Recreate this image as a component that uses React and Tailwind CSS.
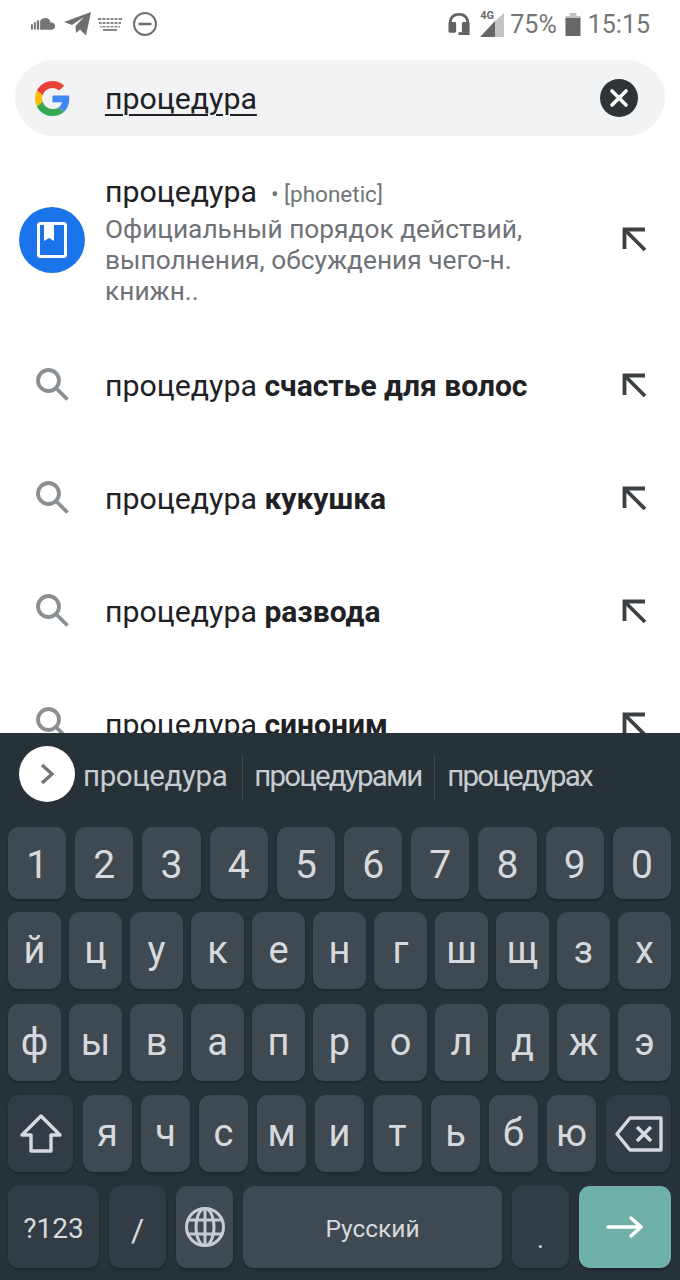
import React from 'react'

const numbers = ['1', '2', '3', '4', '5', '6', '7', '8', '9', '0']
const rowOne = ['й', 'ц', 'у', 'к', 'е', 'н', 'г', 'ш', 'щ', 'з', 'х']
const rowTwo = ['ф', 'ы', 'в', 'а', 'п', 'р', 'о', 'л', 'д', 'ж', 'э']
const rowThree = ['я', 'ч', 'с', 'м', 'и', 'т', 'ь', 'б', 'ю']
const suggestions = ['счастье для волос', 'кукушка', 'развода', 'синоним']

function GoogleLogo() {
  return (
    <svg viewBox="0 0 48 48" className="w-[35px] h-[35px]">
      <path fill="#EA4335" d="M24 9.500c3.500 0 6.700 1.200 9.200 3.600l6.900-6.900C35.900 2.400 30.500 0 24 0 14.600 0 6.500 5.400 2.600 13.200l8 6.200C12.500 13.600 17.800 9.500 24 9.500z" />
      <path fill="#4285F4" d="M47 24.500c0-1.600-.1-3.100-.4-4.500H24v9h12.900c-.6 3-2.200 5.500-4.700 7.200l7.700 6C44.400 38.500 47 32.100 47 24.500z" />
      <path fill="#FBBC05" d="M10.600 28.600c-.5-1.400-.8-3-.8-4.600s.3-3.200.8-4.600l-8-6.200C.9 16.500 0 20.100 0 24s.9 7.500 2.600 10.800l8-6.200z" />
      <path fill="#34A853" d="M24 48c6.500 0 11.900-2.100 15.900-5.800l-7.700-6c-2.200 1.400-4.900 2.300-8.200 2.300-6.200 0-11.500-4.100-13.400-9.900l-8 6.200C6.500 42.600 14.600 48 24 48z" />
    </svg>
  )
}

function ArrowUpLeft() {
  return (
    <svg viewBox="0 0 32 32" className="w-8 h-8" fill="none" stroke="#3c4043" strokeWidth="3.800">
      <path d="M27 5.500H6.500V25" />
      <path d="M6.500 5.500 27 26" />
    </svg>
  )
}

function SearchIcon() {
  return (
    <svg viewBox="0 0 36 36" className="w-9 h-9 mb-[4px]" fill="none" stroke="#8a8f93" strokeWidth="3.800">
      <circle cx="14.500" cy="14.500" r="10.500" />
      <path d="M22 22 33.500 33.500" />
    </svg>
  )
}

function Key({ children, className = 'bg-[#3f4951]' }) {
  return (
    <div className={`flex items-center justify-center rounded-[11px] shadow-[0_2px_2px_rgba(0,0,0,0.22)] text-[#d6dade] ${className}`}>
      {children}
    </div>
  )
}

function StatusBar() {
  return (
    <div className="h-12 flex items-center justify-between pl-[31px] pr-[30px] text-[#6e6e6e]">
      <div className="flex items-center">
        <svg viewBox="0 0 26 14" className="w-[25px] h-[14px]" fill="#757575">
          <rect x="0" y="7" width="2" height="6" rx="1" />
          <rect x="3" y="5" width="2" height="8" rx="1" />
          <rect x="6" y="3" width="2.500" height="10" rx="1" />
          <path d="M9.500 13V3.500C11 1.500 13 .8 15 .8c3 0 5 2 5.500 4.800 2.500-.6 4.500 1 4.500 3.700S23 13 21 13z" />
        </svg>
        <svg viewBox="0 0 27 24" className="w-[27px] h-6 ml-2" fill="#6f6f6f">
          <path d="M27 0 22 23.500 16 17.500 12 21 11.500 14 20 5 8 13 0 10z" />
        </svg>
        <svg viewBox="0 0 24 14" className="w-6 h-[14px] ml-[7px]" fill="#8a8a8a">
          <path d="M0 1h24v2H0zM1 5h22v2H1zM2 9h20v1.500H2zM5 12h14v2H5z" />
          <path stroke="#ffffff" strokeWidth="1" d="M4 0v11M8 0v11M12 0v11M16 0v11M20 0v11" />
        </svg>
        <svg viewBox="0 0 24 24" className="w-6 h-6 ml-[11px]" fill="none" stroke="#6f6f6f" strokeWidth="2">
          <circle cx="12" cy="12" r="11" />
          <path strokeWidth="2.600" d="M5.500 12h13" />
        </svg>
      </div>
      <div className="flex items-center text-[25px] leading-none text-[#757575]">
        <svg viewBox="0 0 24 24" className="w-[23px] h-[24px]" fill="#626262">
          <path d="M1 13V10C1 4 5.500 .5 11.500 .5S22 4 22 10v3h-3v-3C19 6 16 3.500 11.500 3.500S4 6 4 10v3z" />
          <rect x="0.500" y="10" width="8" height="11" rx="1.500" />
          <rect x="14.500" y="10" width="8" height="11" rx="1.500" />
          <path d="M11 20.500h11.500v3H11z" />
        </svg>
        <div className="relative w-6 h-[25px] ml-[9px]">
          <svg viewBox="0 0 24 24" className="absolute left-0 bottom-0 w-6 h-6">
            <path fill="#c4c4c4" d="M24 0v24H15V8z" />
            <path fill="#666666" d="M15 8v16H0z" />
          </svg>
          <span className="absolute left-0 top-[-2px] text-[11px] font-bold text-[#6a6a6a]">4G</span>
        </div>
        <span className="ml-[6px]">75%</span>
        <svg viewBox="0 0 15 23" className="w-[16px] h-[23px] ml-2">
          <path fill="#c2c2c2" d="M4 0h7v3h4v4H0V3h4z" />
          <path fill="#666666" d="M0 5h15v18H0z" />
        </svg>
        <span className="ml-[7px]">15:15</span>
      </div>
    </div>
  )
}

function SearchBar() {
  return (
    <div className="mt-3 mx-[15px] h-[76px] rounded-[38px] bg-[#f1f3f4] flex items-center pl-5 pr-[27px]">
      <GoogleLogo />
      <span className="ml-[35px] pt-[2px] text-[30.300px] text-[#202124] underline underline-offset-[5px] decoration-[1.500px] flex-1">процедура</span>
      <div className="w-[38px] h-[38px] rounded-full bg-[#2f3437] flex items-center justify-center">
        <svg viewBox="0 0 20 20" className="w-5 h-5" fill="none" stroke="#ffffff" strokeWidth="3.600" strokeLinecap="round">
          <path d="M3 3 17 17M17 3 3 17" />
        </svg>
      </div>
    </div>
  )
}

function Results() {
  return (
    <div className="flex-1 min-h-0 overflow-hidden">
      <div className="mt-[30px] h-[148px] flex items-center pl-[19px] pr-[30px]">
        <div className="w-[66px] h-[66px] rounded-full bg-[#1a73e8] flex items-center justify-center shrink-0">
          <svg viewBox="0 0 30 36" className="w-[30px] h-9" fill="none">
            <rect x="1.500" y="1.500" width="27" height="33" rx="2" stroke="#ffffff" strokeWidth="3" />
            <path fill="#ffffff" d="M7 2h10v17l-5-3-5 3z" />
          </svg>
        </div>
        <div className="ml-5 mb-1 flex-1">
          <div className="flex items-baseline">
            <span className="text-[30.300px] leading-[44px] text-[#202124]">процедура</span>
            <span className="ml-[14px] text-[22.500px] text-[#70757a]">• [phonetic]</span>
          </div>
          <p className="w-[460px] text-[26.300px] leading-[31px] text-[#6f7276]">
            Официальный порядок действий, выполнения, обсуждения чего-н. книжн..
          </p>
        </div>
        <ArrowUpLeft />
      </div>
      <div className="mt-[15px]">
        {suggestions.map((bold) => (
          <div key={bold} className="h-[113px] flex items-center pl-[34px] pr-[30px]">
            <SearchIcon />
            <div className="ml-[35px] flex-1 text-[30.300px] text-[#202124]">
              процедура <span className="font-bold text-[30px]">{bold}</span>
            </div>
            <ArrowUpLeft />
          </div>
        ))}
      </div>
    </div>
  )
}

function Keyboard() {
  return (
    <div className="h-[547px] shrink-0 bg-[#263138] flex flex-col pl-2 pr-[9px] relative z-10">
      <div className="h-[94px] flex items-center pl-[11px] pb-[7px] text-[29.500px] text-[#c6ccd0]">
        <div className="w-[56px] h-[56px] mb-[6px] rounded-full bg-white flex items-center justify-center shrink-0">
          <svg viewBox="0 0 16 24" className="w-4 h-6" fill="none" stroke="#757575" strokeWidth="3.400">
            <path d="M3 3 13 12 3 21" />
          </svg>
        </div>
        <span className="ml-2 tracking-[-0.400px]">процедура</span>
        <div className="w-px h-[46px] bg-[#3d4850] ml-[15px]" />
        <span className="ml-[11px] tracking-[-1.800px]">процедурами</span>
        <div className="w-px h-[46px] bg-[#3d4850] ml-[13px]" />
        <span className="ml-[12px] tracking-[-1.800px]">процедурах</span>
      </div>

      <div className="h-[72px] grid grid-cols-10 gap-[9px] text-[39px]">
        {numbers.map((k) => <Key key={k} className="bg-[#3f4951] pt-[5px]">{k}</Key>)}
      </div>
      <div className="mt-[13px] h-[77px] grid grid-cols-11 gap-2 text-[38px]">
        {rowOne.map((k) => <Key key={k}>{k}</Key>)}
      </div>
      <div className="mt-[15px] h-[77px] grid grid-cols-11 gap-2 text-[38px]">
        {rowTwo.map((k) => <Key key={k}>{k}</Key>)}
      </div>
      <div className="mt-[14px] h-[77px] flex gap-[10px] text-[38px]">
        <Key className="w-[65px] bg-[#323c44] shrink-0">
          <svg viewBox="0 0 44 42" className="w-[44px] h-[42px]" fill="none" stroke="#d6dade" strokeWidth="3.400" strokeLinejoin="round">
            <path d="M22 3 41 22H32V38H12V22H3z" />
          </svg>
        </Key>
        <div className="flex-1 grid grid-cols-9 gap-[9px]">
          {rowThree.map((k) => <Key key={k}>{k}</Key>)}
        </div>
        <Key className="w-[65px] bg-[#323c44] shrink-0">
          <svg viewBox="0 0 48 38" className="w-12 h-[38px]" fill="none" stroke="#d6dade" strokeWidth="3.400" strokeLinejoin="round">
            <path d="M15 3H46V35H15L2 19z" />
            <path strokeWidth="3.600" d="M22 12 36 26M36 12 22 26" />
          </svg>
        </Key>
      </div>
      <div className="mt-[14px] h-[82px] flex gap-[10px]">
        <Key className="w-[91px] bg-[#323c44] pt-[4px] text-[28px] text-[#aab0b5]">?123</Key>
        <Key className="w-[57px] bg-[#323c44] pt-[6px] text-[32px]">/</Key>
        <Key className="w-[57px] bg-[#3f4951]">
          <svg viewBox="0 0 42 42" className="w-[42px] h-[42px]" fill="none" stroke="#c8ccd1" strokeWidth="3">
            <circle cx="21" cy="21" r="18.500" />
            <ellipse cx="21" cy="21" rx="9" ry="18.500" />
            <path d="M21 2.500v37M4 14h34M4 28h34" />
          </svg>
        </Key>
        <Key className="flex-1 bg-[#3f4951] pt-[4px] text-[24.500px] text-[#a9aeb3]">Русский</Key>
        <Key className="w-[57px] bg-[#323c44] items-end pb-4 text-[26px] leading-none">.</Key>
        <Key className="w-[92px] bg-[#6fb0a8]">
          <svg viewBox="0 0 38 24" className="w-[38px] h-6" fill="none" stroke="#ffffff" strokeWidth="3.400" strokeLinecap="round">
            <path d="M2 12H34M25 3 35 12 25 21" />
          </svg>
        </Key>
      </div>
    </div>
  )
}

export default function App() {
  return (
    <div className="w-[680px] h-[1280px] bg-white flex flex-col overflow-hidden font-['Roboto',sans-serif]">
      <StatusBar />
      <SearchBar />
      <Results />
      <Keyboard />
    </div>
  )
}
